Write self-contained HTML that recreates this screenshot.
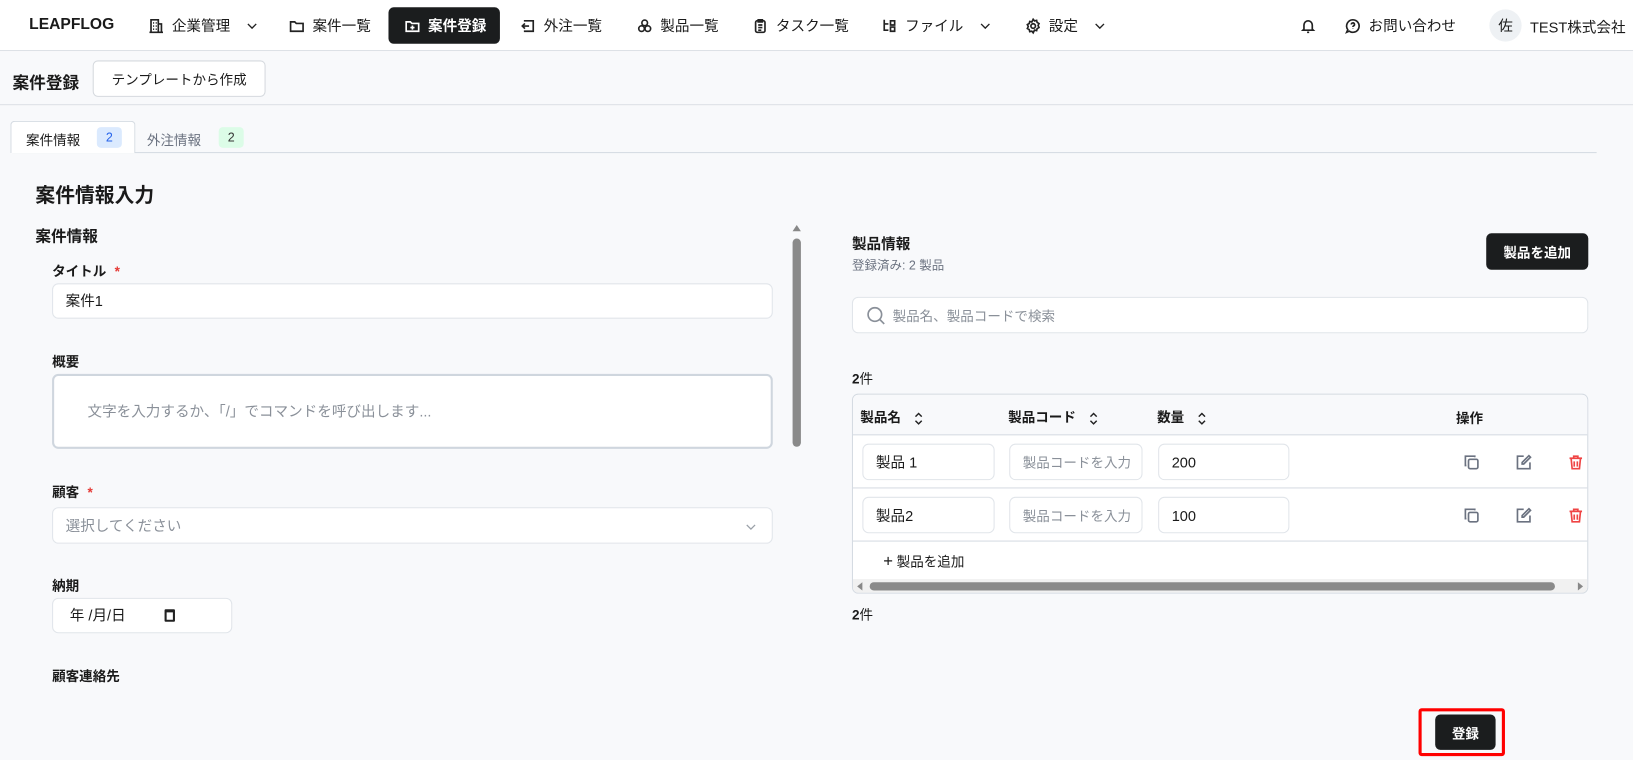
<!DOCTYPE html>
<html><head><meta charset="utf-8"><style>
*{box-sizing:border-box;margin:0;padding:0}
html,body{width:1633px;height:760px;overflow:hidden;background:#f8f9fb}
body{font-family:"Liberation Sans","Noto Sans CJK JP",sans-serif;color:#1a1a1a;position:relative}
#w{position:absolute;left:0;top:0;width:1568px;height:730px;transform:scale(1.0415);transform-origin:0 0}
.a{position:absolute}
.nav{top:0;left:0;width:1568px;height:49px;background:#fff;border-bottom:1px solid #dde1e6}
.ni{position:absolute;top:8px;height:33px;display:flex;align-items:center;font-size:14px;gap:7px;white-space:nowrap}
.ni svg{width:16px;height:16px;fill:none;stroke:#222;stroke-width:1.6}
.ni svg.ch{width:12px;height:12px;margin-left:8px;stroke-width:1.3}
.inp{position:absolute;background:#fff;border:1px solid #e1e5ea;border-radius:6px;font-size:14px;display:flex;align-items:center;padding-left:12px}
.lbl{position:absolute;font-size:13px;font-weight:bold}
.req{color:#e53935;margin-left:8px}
.ph{color:#8a9099}
.ic svg{width:16px;height:16px;fill:none;stroke-width:1.6}
.so{display:inline-block;vertical-align:middle;margin-left:12px}
</style></head><body><div id="w">
<div class="a nav">
 <div class="a" style="left:28px;top:15px;font-weight:bold;font-size:15px">LEAPFLOG</div>
 <div class="ni" style="left:142px"><svg viewBox="0 0 16 16"><path d="M3 14V2h7v12M10 6h3v8M1.5 14h13M5 5h1M7.5 5h1M5 8h1M7.5 8h1M5 11h1M7.5 11h1"/></svg>企業管理<svg class="ch" viewBox="0 0 12 12"><path d="M2 4l4 4 4-4"/></svg></div>
 <div class="ni" style="left:277px"><svg viewBox="0 0 16 16"><path d="M2 4h4l1.5 1.5H14V13H2z"/></svg>案件一覧</div>
 <div class="ni" style="left:373px;width:107px;background:#1b1d1e;color:#fff;border-radius:5px;padding-left:15px;top:7px;height:35px"><svg viewBox="0 0 16 16" style="stroke:#fff"><path d="M2 4h4l1.5 1.5H14V13H2zM8 7.5v4M6 9.5h4"/></svg><b>案件登録</b></div>
 <div class="ni" style="left:499px"><svg viewBox="0 0 16 16"><path d="M4 3h9v10H4M2 8h7M5 5.5 2.5 8 5 10.5"/></svg>外注一覧</div>
 <div class="ni" style="left:611px"><svg viewBox="0 0 16 16"><circle cx="8" cy="5" r="2.7"/><circle cx="5" cy="10.5" r="2.7"/><circle cx="11" cy="10.5" r="2.7"/></svg>製品一覧</div>
 <div class="ni" style="left:722px"><svg viewBox="0 0 16 16"><rect x="3.5" y="3" width="9" height="11" rx="1.5"/><path d="M6 2h4v2H6zM6 7h4M6 9.5h4M6 12h3"/></svg>タスク一覧</div>
 <div class="ni" style="left:846px"><svg viewBox="0 0 16 16"><path d="M3 2v10h4M3 6h4M9 3h4v4H9zM9 9h4v4H9z"/></svg>ファイル<svg class="ch" viewBox="0 0 12 12"><path d="M2 4l4 4 4-4"/></svg></div>
 <div class="ni" style="left:984px"><svg viewBox="0 0 16 16"><circle cx="8" cy="8" r="2.2"/><path d="M8 1.5l1.3 1.6 2-.5.5 2 1.8 1-.9 1.9.9 1.9-1.8 1-.5 2-2-.5L8 14.5l-1.3-1.6-2 .5-.5-2-1.8-1 .9-1.9-.9-1.9 1.8-1 .5-2 2 .5z"/></svg>設定<svg class="ch" viewBox="0 0 12 12"><path d="M2 4l4 4 4-4"/></svg></div>
 <div class="ni" style="left:1248px"><svg viewBox="0 0 16 16"><path d="M4 11V7a4 4 0 0 1 8 0v4l1 1H3zM7 14h2"/></svg></div>
 <div class="ni" style="left:1291px"><svg viewBox="0 0 16 16"><path d="M8 2a6 6 0 1 1-3.5 10.9L2 14l1.1-2.5A6 6 0 0 1 8 2zM6.5 6.5a1.5 1.5 0 1 1 2 1.4c-.4.2-.5.5-.5 1M8 10.5v.3"/></svg>お問い合わせ</div>
 <div class="a" style="left:1430px;top:9px;width:31px;height:31px;border-radius:50%;background:#eef1f4;font-size:14px;display:flex;align-items:center;justify-content:center">佐</div>
 <div class="a" style="left:1469px;top:16px;font-size:14px">TEST株式会社</div>
</div>
<div class="a" style="left:12px;top:66px;font-size:16px;font-weight:bold">案件登録</div>
<div class="a" style="left:89px;top:58px;width:166px;height:35px;border:1px solid #d5d9de;border-radius:5px;background:#fff;font-size:13px;display:flex;align-items:center;justify-content:center">テンプレートから作成</div>
<div class="a" style="left:0;top:100px;width:1568px;border-top:1px solid #dde1e6"></div>
<div class="a" style="left:12px;top:146px;width:1521px;border-top:1px solid #d5dbe2"></div>
<div class="a" style="left:10px;top:116px;width:120px;height:31px;background:#fff;border:1px solid #d5dbe2;border-bottom:none;border-radius:4px 4px 0 0"></div>
<div class="a" style="left:25px;top:124px;font-size:13px">案件情報</div>
<div class="a" style="left:93px;top:122px;width:24px;height:20px;background:#dbeafe;color:#2563eb;border-radius:4px;font-size:12px;text-align:center;line-height:20px">2</div>
<div class="a" style="left:141px;top:124px;font-size:13px;color:#6b7280">外注情報</div>
<div class="a" style="left:210px;top:122px;width:24px;height:20px;background:#dcfce7;color:#333;border-radius:4px;font-size:12px;text-align:center;line-height:20px">2</div>
<div class="a" style="left:34px;top:173px;font-size:19px;font-weight:bold">案件情報入力</div>
<div class="a" style="left:34px;top:216px;font-size:15px;font-weight:bold">案件情報</div>
<div class="lbl" style="left:50px;top:250px">タイトル<span class="req">*</span></div>
<div class="inp" style="left:50px;top:272px;width:692px;height:34px">案件1</div>
<div class="lbl" style="left:50px;top:337px">概要</div>
<div class="inp" style="left:50px;top:359px;width:692px;height:72px;border:2px solid #cfd6de;padding-left:32px"><span class="ph">文字を入力するか、「/」でコマンドを呼び出します...</span></div>
<div class="lbl" style="left:50px;top:462px">顧客<span class="req">*</span></div>
<div class="inp" style="left:50px;top:487px;width:692px;height:35px"><span class="ph">選択してください</span><svg class="a" style="right:14px;top:12px" width="12" height="12" viewBox="0 0 12 12" fill="none" stroke="#9aa0a8" stroke-width="1.2"><path d="M2 4l4 4 4-4"/></svg></div>
<div class="lbl" style="left:50px;top:552px">納期</div>
<div class="inp" style="left:50px;top:574px;width:173px;height:34px;padding-left:16px">年 /月/日<span class="a" style="left:107px;top:10px;width:10px;height:12px;border:2px solid #222;border-top-width:3px;border-radius:1px"></span></div>
<div class="lbl" style="left:50px;top:639px">顧客連絡先</div>
<div class="a" style="left:758px;top:213px;width:14px;height:442px;background:#f8f9fb"></div>
<div class="a" style="left:761px;top:216px;width:0;height:0;border-left:4px solid transparent;border-right:4px solid transparent;border-bottom:6px solid #888"></div>
<div class="a" style="left:761px;top:229px;width:8px;height:200px;background:#8a8a8a;border-radius:4px"></div>
<div class="a" style="left:818px;top:224px;font-size:14px;font-weight:bold">製品情報</div>
<div class="a" style="left:818px;top:246px;font-size:12px;color:#6b7280">登録済み: 2 製品</div>
<div class="a" style="left:1427px;top:224px;width:98px;height:35px;background:#1b1d1e;color:#fff;border-radius:5px;font-size:13px;font-weight:bold;display:flex;align-items:center;justify-content:center">製品を追加</div>
<div class="inp" style="left:818px;top:285px;width:707px;height:35px;padding-left:12px"><svg width="20" height="20" viewBox="0 0 20 20" fill="none" stroke="#8a9099" stroke-width="1.6"><circle cx="9" cy="9" r="6.5"/><path d="M14 14l4 4"/></svg><span class="ph" style="margin-left:6px;font-size:13px">製品名、製品コードで検索</span></div>
<div class="a" style="left:818px;top:353px;font-size:13px"><b>2</b>件</div>
<div class="a" style="left:818px;top:378px;width:707px;height:192px;border:1px solid #d5dbe2;border-radius:6px;background:#fff;overflow:hidden">
 <div class="a" style="left:0;top:0;width:707px;height:39px;background:#f8f9fb;border-bottom:1px solid #d5dbe2;font-size:13px;font-weight:bold">
  <span class="a" style="left:7px;top:11px">製品名<svg class="so" width="10" height="14" viewBox="0 0 10 14" fill="none" stroke="#222" stroke-width="1.4"><path d="M2 5l3-3 3 3M2 9l3 3 3-3"/></svg></span>
  <span class="a" style="left:149px;top:11px">製品コード<svg class="so" width="10" height="14" viewBox="0 0 10 14" fill="none" stroke="#222" stroke-width="1.4"><path d="M2 5l3-3 3 3M2 9l3 3 3-3"/></svg></span>
  <span class="a" style="left:292px;top:11px">数量<svg class="so" width="10" height="14" viewBox="0 0 10 14" fill="none" stroke="#222" stroke-width="1.4"><path d="M2 5l3-3 3 3M2 9l3 3 3-3"/></svg></span>
  <span class="a" style="left:579px;top:12px">操作</span>
 </div>
 <div class="a" style="left:0;top:89px;width:707px;border-top:1px solid #d5dbe2"></div>
 <div class="a" style="left:0;top:140px;width:707px;border-top:1px solid #d5dbe2"></div>
 <div class="inp" style="left:9px;top:47px;width:127px;height:35px">製品 1</div>
 <div class="inp" style="left:150px;top:47px;width:128px;height:35px"><span class="ph" style="font-size:13px;white-space:nowrap;overflow:hidden">製品コードを入力</span></div>
 <div class="inp" style="left:293px;top:47px;width:126px;height:35px">200</div>
 <div class="inp" style="left:9px;top:98px;width:127px;height:35px">製品2</div>
 <div class="inp" style="left:150px;top:98px;width:128px;height:35px"><span class="ph" style="font-size:13px;white-space:nowrap;overflow:hidden">製品コードを入力</span></div>
 <div class="inp" style="left:293px;top:98px;width:126px;height:35px">100</div>
 <div class="a ic" style="left:586px;top:57px"><svg viewBox="0 0 16 16" stroke="#6b7280"><rect x="5" y="5" width="9" height="9" rx="1.5"/><path d="M11 3V2H2v9h1"/></svg></div>
 <div class="a ic" style="left:636px;top:57px"><svg viewBox="0 0 16 16" stroke="#6b7280"><path d="M8 2H2v12h12V8M13 1.5l1.5 1.5L8 9.5H6.5V8z"/></svg></div>
 <div class="a ic" style="left:686px;top:57px"><svg viewBox="0 0 16 16" stroke="#ef4444"><path d="M2 4h12M6 4V2h4v2M3.5 4l1 10h7l1-10M6.5 7v5M9.5 7v5"/></svg></div>
 <div class="a ic" style="left:586px;top:108px"><svg viewBox="0 0 16 16" stroke="#6b7280"><rect x="5" y="5" width="9" height="9" rx="1.5"/><path d="M11 3V2H2v9h1"/></svg></div>
 <div class="a ic" style="left:636px;top:108px"><svg viewBox="0 0 16 16" stroke="#6b7280"><path d="M8 2H2v12h12V8M13 1.5l1.5 1.5L8 9.5H6.5V8z"/></svg></div>
 <div class="a ic" style="left:686px;top:108px"><svg viewBox="0 0 16 16" stroke="#ef4444"><path d="M2 4h12M6 4V2h4v2M3.5 4l1 10h7l1-10M6.5 7v5M9.5 7v5"/></svg></div>
 <div class="a" style="left:29px;top:150px;font-size:13px"><span style="font-size:16px">+</span> 製品を追加</div>
 <div class="a" style="left:0;top:177px;width:707px;height:14px;background:#f1f1f1"></div>
 <div class="a" style="left:4px;top:180px;width:0;height:0;border-top:4px solid transparent;border-bottom:4px solid transparent;border-right:5px solid #888"></div>
 <div class="a" style="left:16px;top:180px;width:658px;height:8px;background:#8a8a8a;border-radius:4px"></div>
 <div class="a" style="left:696px;top:180px;width:0;height:0;border-top:4px solid transparent;border-bottom:4px solid transparent;border-left:5px solid #888"></div>
</div>
<div class="a" style="left:818px;top:580px;font-size:13px"><b>2</b>件</div>
<div class="a" style="left:1362px;top:680px;width:83px;height:46px;border:3px solid #ff0000;border-radius:3px"></div>
<div class="a" style="left:1378px;top:686px;width:58px;height:34px;background:#1b1d1e;color:#fff;border-radius:5px;font-size:13px;font-weight:bold;display:flex;align-items:center;justify-content:center">登録</div>
</div></body></html>
